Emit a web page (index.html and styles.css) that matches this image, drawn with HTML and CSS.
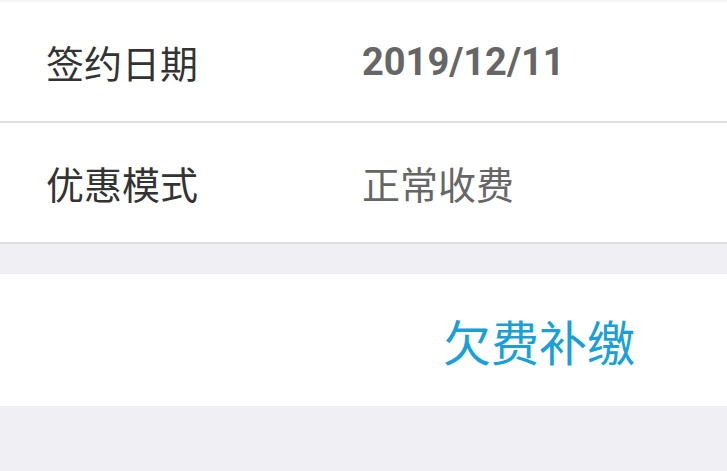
FILE: index.html
```html
<!DOCTYPE html>
<html lang="zh-CN">
<head>
    <meta charset="UTF-8">
    <meta name="viewport" content="width=device-width, initial-scale=1.0">
    <title>合同信息</title>
    <link rel="stylesheet" href="styles.css">
</head>
<body>
    <div class="info-list">
        <div class="info-row">
            <span class="label">签约日期</span>
            <span class="value date">2019/12/11</span>
        </div>
        <div class="info-row">
            <span class="label">优惠模式</span>
            <span class="value">正常收费</span>
        </div>
    </div>

    <div class="action-bar">
        <a class="action-link" href="#">欠费补缴</a>
    </div>
</body>
</html>
```

FILE: styles.css
```css
body {
    margin: 0;
    background-color: #efeff4;
    font-family: 'Noto Sans CJK SC', sans-serif;
}

.info-list {
    background-color: white;
    border-top: 2px solid #f5f5f5;
}

.info-row {
    display: flex;
    align-items: center;
    height: 119px;
    padding-left: 46px;
    border-bottom: 2px solid #dedede;
}

.label {
    width: 316px;
    font-size: 38px;
    color: #333;
}

.value {
    font-size: 38px;
    color: #666;
}

.date {
    font-family: 'Roboto', sans-serif;
    font-weight: bold;
}

.action-bar {
    margin-top: 30px;
    height: 132px;
    background-color: white;
    display: flex;
    align-items: center;
    justify-content: flex-end;
    padding-right: 92px;
}

.action-link {
    font-size: 48px;
    color: #1aa0d8;
    text-decoration: none;
}
```
